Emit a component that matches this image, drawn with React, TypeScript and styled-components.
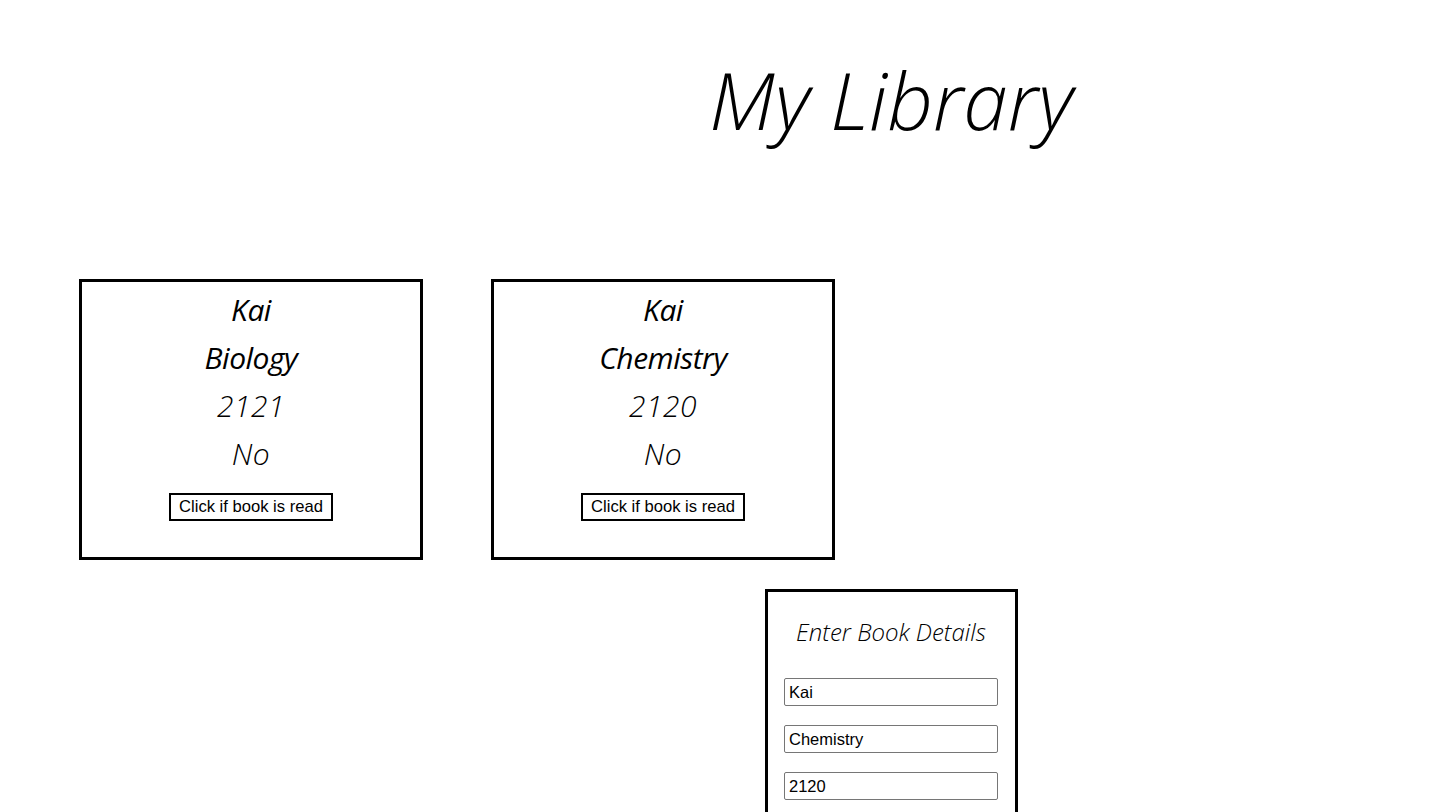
import React, { useState } from 'react';
import styled, { createGlobalStyle } from 'styled-components';

const GlobalStyle = createGlobalStyle`
  body {
    margin: 0;
    background: #fff;
    font-family: "Open Sans", "Liberation Sans", sans-serif;
    color: #000;
  }
`

const Page = styled.div`
  display: flex;
  flex-direction: column;
  padding-bottom: 40px;
`

const Header = styled.header`
  width: 600px;
  margin-left: 591px;
  height: 279px;
  text-align: center;
`

const Title = styled.h1`
  margin: 0;
  padding-top: 51px;
  font-size: 80px;
  line-height: 96px;
  font-weight: 300;
  font-style: italic;
`

const Shelf = styled.div`
  display: flex;
  gap: 68px;
  padding-left: 79px;
`

const Card = styled.div`
  width: 344px;
  height: 281px;
  box-sizing: border-box;
  border: 3px solid #000;
  padding-top: 4px;
  display: flex;
  flex-direction: column;
  align-items: center;
`

const Line = styled.div<{ $light?: boolean }>`
  font-size: 30px;
  line-height: 48px;
  font-style: italic;
  font-weight: ${p => (p.$light ? 300 : 400)};
  letter-spacing: ${p => (p.$light ? '0.5px' : '-0.5px')};
`

const ReadButton = styled.button`
  margin-top: 15px;
  height: 28px;
  padding: 0 8px;
  background: #fff;
  border: 2px solid #000;
  font-family: "Liberation Sans", Arial, sans-serif;
  font-size: 16.6px;
  color: #000;
  cursor: pointer;
`

const Form = styled.form`
  width: 253px;
  box-sizing: border-box;
  margin: 29px 0 0 765px;
  border: 3px solid #000;
  padding: 23px 17px 20px 16px;
  display: flex;
  flex-direction: column;
  gap: 19px;
`

const FormTitle = styled.h2`
  margin: 0 0 10px;
  text-align: center;
  font-size: 24px;
  line-height: 34px;
  font-weight: 300;
  font-style: italic;
`

const Field = styled.input`
  height: 28px;
  box-sizing: border-box;
  width: 100%;
  border: 1px solid #767676;
  border-radius: 2px;
  padding: 0 4px;
  font-family: "Liberation Sans", Arial, sans-serif;
  font-size: 16.5px;
  color: #000;
`

interface Book {
  author: string
  title: string
  pages: string
  read: boolean
}

const initialBooks: Book[] = [
  { author: 'Kai', title: 'Biology', pages: '2121', read: false },
  { author: 'Kai', title: 'Chemistry', pages: '2120', read: false },
]

const App: React.FC = () => {
  const [books, setBooks] = useState(initialBooks)

  const toggleRead = (i: number) => {
    setBooks(books.map((b, j) => (j === i ? { ...b, read: !b.read } : b)))
  }

  return (
    <Page>
      <GlobalStyle />
      <Header>
        <Title>My Library</Title>
      </Header>
      <Shelf>
        {books.map((book, i) => (
          <Card key={i}>
            <Line>{book.author}</Line>
            <Line>{book.title}</Line>
            <Line $light>{book.pages}</Line>
            <Line $light>{book.read ? 'Yes' : 'No'}</Line>
            <ReadButton type="button" onClick={() => toggleRead(i)}>
              Click if book is read
            </ReadButton>
          </Card>
        ))}
      </Shelf>
      <Form onSubmit={e => e.preventDefault()}>
        <FormTitle>Enter Book Details</FormTitle>
        <Field defaultValue="Kai" />
        <Field defaultValue="Chemistry" />
        <Field defaultValue="2120" />
        <Field placeholder="Read?" />
      </Form>
    </Page>
  )
}

export default App
